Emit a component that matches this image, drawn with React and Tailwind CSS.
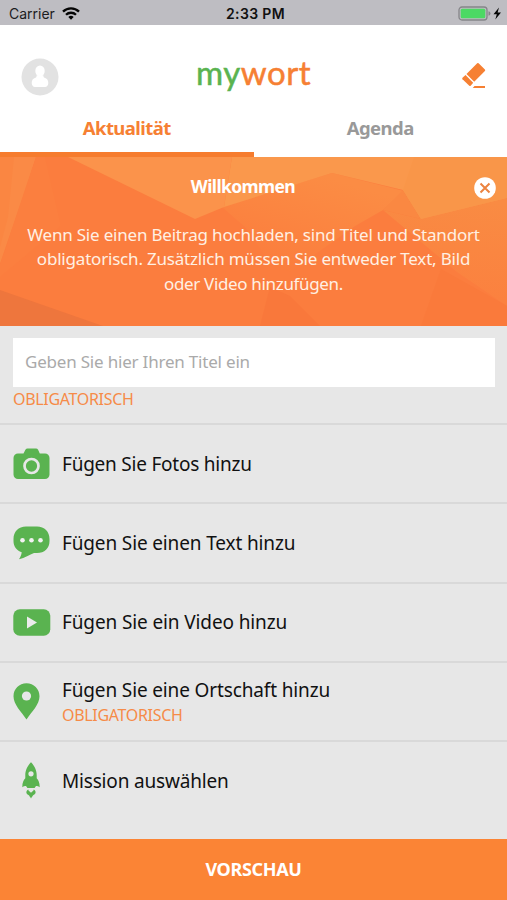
const GREEN = "#5ab350";

const CameraIcon = () => (
  <svg width="37" height="32" viewBox="0 0 37 32">
    <path
      d="M5 5.500h5.500L12.400 1.800Q13.200 .5 14.500 .5h8.500q1.300 0 2.100 1.300L26.800 5.500H32a4.500 4.500 0 0 1 4.500 4.500v16.500a4.500 4.500 0 0 1-4.500 4.500H5a4.500 4.500 0 0 1-4.500-4.500V10A4.500 4.500 0 0 1 5 5.500z"
      fill={GREEN}
    />
    <circle cx="18.500" cy="18" r="7" fill="none" stroke="#e7e7e7" strokeWidth="2.700" />
  </svg>
);

const SpeechIcon = () => (
  <svg width="37" height="34" viewBox="0 0 37 34">
    <path
      d="M13 .5h11c7.500 0 12.500 5 12.500 12.500v2c0 7.500-5 12-12.500 12h-3c-4.500 2-9 4.700-15 6.200 1.500-2.200 2.500-4.600 2.700-7C3.500 24.500.5 20.500.5 15v-2C.5 5.500 5.500.5 13 .5z"
      fill={GREEN}
    />
    <g fill="#f2f2f2">
      <circle cx="9.500" cy="14.300" r="2.300" />
      <circle cx="18.500" cy="14.300" r="2.300" />
      <circle cx="27.500" cy="14.300" r="2.300" />
    </g>
  </svg>
);

const VideoIcon = () => (
  <svg width="38" height="27" viewBox="0 0 38 27">
    <rect x=".3" y=".3" width="37" height="26.400" rx="6.500" fill={GREEN} />
    <path d="M14 7.500v12l10-6z" fill="#ececec" />
  </svg>
);

const PinIcon = () => (
  <svg width="27" height="37" viewBox="0 0 27 37">
    <path
      d="M13.500.3C6.200.3.5 6 .5 13.200c0 8.300 7.500 15 13 23.300 5.500-8.300 13-15 13-23.300C26.500 6 20.800.3 13.500.3z"
      fill={GREEN}
    />
    <circle cx="13.500" cy="13" r="4.600" fill="#e7e7e7" />
  </svg>
);

const RocketIcon = () => (
  <svg className="ml-[9px]" width="18" height="37" viewBox="0 0 18 37">
    <path
      d="M9 .3C5.700 3.500 3.300 8.200 3.300 13v3.300C1.500 18.300.3 20.500.3 25.200c1.300-.9 2.500-1.300 3.700-1.100l1.400 2h7.200l1.400-2c1.200-.2 2.400.2 3.700 1.100 0-4.700-1.200-6.900-3-8.900V13C14.700 8.200 12.300 3.500 9 .3z"
      fill={GREEN}
    />
    <circle cx="9" cy="11.800" r="2.600" fill="#e7e7e7" />
    <path
      d="M6.300 27.500c-2.600 1.500-2.500 4.400.2 5.400.8.700 1.500 1.800 2.500 3.500 1-1.700 1.700-2.800 2.500-3.500 2.700-1 2.800-3.900.2-5.400 0 1.700-1.200 1.500-2.700 3.200-1.500-1.700-2.700-1.500-2.700-3.200z"
      fill={GREEN}
    />
  </svg>
);

const items = [
  { label: "Fügen Sie Fotos hinzu", tracking: "tracking-[-0.23px]", Icon: CameraIcon },
  { label: "Fügen Sie einen Text hinzu", tracking: "tracking-[-0.14px]", Icon: SpeechIcon },
  { label: "Fügen Sie ein Video hinzu", tracking: "tracking-[-0.12px]", Icon: VideoIcon },
  { label: "Fügen Sie eine Ortschaft hinzu", tracking: "tracking-[-0.14px]", Icon: PinIcon, required: true },
  { label: "Mission auswählen", tracking: "tracking-[-0.18px]", Icon: RocketIcon },
];

const StatusBar = () => (
  <div className="grid h-[25px] shrink-0 grid-cols-3 items-center bg-[#bebdc2] pt-[2px] font-['Inter',sans-serif] text-sm leading-none text-[#1c1c1e]">
    <div className="flex items-center gap-[7px] pl-[9px]">
      <span>Carrier</span>
      <svg width="18" height="13" viewBox="0 0 18 13">
        <g fill="none" stroke="#050505" strokeWidth="2.300">
          <path d="M1 4.600a11.300 11.300 0 0 1 16 0" />
          <path d="M4 7.800a7.100 7.100 0 0 1 10 0" />
        </g>
        <path d="M6.300 10.100a3.800 3.800 0 0 1 5.400 0L9 12.800z" fill="#050505" />
      </svg>
    </div>
    <span className="pl-[4px] text-center font-semibold tracking-[0.35px] text-[#111]">2:33 PM</span>
    <div className="flex justify-end pr-[5px]">
      <svg width="44" height="15" viewBox="0 0 44 15">
        <rect x="1" y="1" width="28" height="13" rx="3" fill="none" stroke="#858589" strokeWidth="1.300" />
        <rect x="2.700" y="2.700" width="24.600" height="9.600" rx="1.500" fill="#4cd964" />
        <path d="M30.500 5.200q2 .6 2 2.300t-2 2.300z" fill="#858589" />
        <path d="M41 1.500 35.500 8.300h3.300L37.300 13.500 43 6.500h-3.400z" fill="#050505" />
      </svg>
    </div>
  </div>
);

const Header = () => (
  <header className="flex h-[132px] shrink-0 flex-col bg-white">
    <div className="grid h-[80px] grid-cols-3 items-center pt-[24px]">
      <svg className="ml-[21px]" width="38" height="38" viewBox="0 0 38 38">
        <circle cx="19" cy="19" r="18.500" fill="#e2e2e2" />
        <ellipse cx="19" cy="13" rx="4.700" ry="5.600" fill="#fff" />
        <path
          d="M15.500 17.500h7q-.5 2 1 2.200c2.500.6 3.800 2.500 3.800 5.300 0 2.300-1.300 4-3.300 4H14c-2 0-3.300-1.700-3.300-4 0-2.800 1.300-4.700 3.800-5.300q1.500-.2 1-2.200z"
          fill="#fff"
        />
      </svg>
      <div className="pb-[10px] text-center font-['Lato',sans-serif] text-[33px] leading-[38px] tracking-[0.5px] text-[#f68033] [-webkit-text-stroke:0.5px]">
        <span className="text-[#5ab350]">my</span>wort
      </div>
      <svg className="mb-[4px] mr-[20px] justify-self-end" width="26" height="27" viewBox="0 0 26 27">
        <g fill="#f68033">
          <path d="M16.200 1.300q.7-.6 1.400 0l6.300 6.300q.7.700 0 1.400L13.200 19.800 5.500 12.100z" />
          <path d="m4.500 13.100 7.700 7.700-2.500 3q-.7.600-1.400 0L1.500 17.300q-.6-.8 0-1.500z" />
          <path d="M13.500 24H24v1.900H11.700z" />
        </g>
      </svg>
    </div>
    <nav className="grid flex-1 grid-cols-2 text-center text-[18.5px] font-bold leading-[45px] tracking-[-0.55px]">
      <span className="border-b-[5px] border-[#f67c2e] text-[#f68033]">Aktualität</span>
      <span className="text-[#999]">Agenda</span>
    </nav>
  </header>
);

// low-poly pattern behind the welcome message
const BannerPattern = () => (
  <svg className="absolute inset-0" width="507" height="169" viewBox="0 0 507 169">
    <defs>
      <linearGradient id="band" gradientUnits="userSpaceOnUse" x1="320" y1="18" x2="290" y2="115">
        <stop offset="0" stopColor="#fb8c44" />
        <stop offset="1" stopColor="#fb7d3d" />
      </linearGradient>
      <linearGradient id="right" gradientUnits="userSpaceOnUse" x1="480" y1="45" x2="470" y2="140">
        <stop offset="0" stopColor="#f98b43" />
        <stop offset="1" stopColor="#fb813f" />
      </linearGradient>
    </defs>
    <path d="M0 0h507v169H0z" fill="#fb7d3e" />
    <path d="M0 0h36L22 43 0 107z" fill="#fa8a46" />
    <path d="M0 0h14L8 60 0 90z" fill="#fa8642" />
    <path d="m45 0 16 69L0 120v-13L36 0z" fill="#fb7f3f" />
    <path d="m222 50 110-34 72 18-21 19-28 16-65 46-18-7-27-38z" fill="url(#band)" />
    <path d="m383 53 38 9 86-21v108l-50-34z" fill="url(#right)" />
    <path d="m383 53 20-20 18 29z" fill="#fa8842" />
    <path d="M68 0h164l-8 50-29 12z" fill="#fb934b" />
    <path d="M232 0h275v41l-86 21-18-29-71-17-108 34z" fill="#fa984c" />
    <path d="M414 0h93v41l-86 21-18-29z" fill="#f99649" />
    <path d="m270 130-10 39h60l-30-30z" fill="#f9783b" />
    <path d="m441 112-20 57h86v-20z" fill="#fa7a3b" />
    <path d="m0 133 103 36H0z" fill="#ee763d" />
  </svg>
);

const Banner = () => (
  <section className="relative h-[169px] shrink-0 overflow-hidden text-center text-white">
    <BannerPattern />
    <div className="relative">
      <h1 className="pr-[21px] pt-[17px] text-[17.5px] font-bold leading-6 tracking-[-0.6px]">Willkommen</h1>
      <p className="mt-[25px] whitespace-nowrap text-[17px] leading-[24.3px] tracking-[-0.2px] text-[#fff0e3]">
        Wenn Sie einen Beitrag hochladen, sind Titel und Standort
        <br />
        obligatorisch. Zusätzlich müssen Sie entweder Text, Bild
        <br />
        <span className="tracking-[-0.34px]">oder Video hinzufügen.</span>
      </p>
    </div>
    <button className="absolute right-[11px] top-[20px]" aria-label="Schließen">
      <svg width="22" height="22" viewBox="0 0 22 22">
        <circle cx="11" cy="11" r="10.800" fill="#fff" />
        <path d="m6.500 6.500 9 9m0-9-9 9" stroke="#ec8340" strokeWidth="2" />
      </svg>
    </button>
  </section>
);

const App = () => (
  <main className="flex h-[900px] w-[507px] flex-col overflow-hidden bg-[#e7e7e7] font-['Noto_Sans',sans-serif]">
    <StatusBar />
    <Header />
    <Banner />

    <div className="h-[97px] shrink-0 pl-[13px] pr-[12px] pt-[12px]">
      <div className="h-[49px] bg-white pl-[12px] text-[17px] leading-[48px] tracking-[-0.2px] text-[#aaa]">
        Geben Sie hier Ihren Titel ein
      </div>
      <p className="text-base leading-6 tracking-[-0.32px] text-[#f68b48]">OBLIGATORISCH</p>
    </div>

    <ul className="flex-1">
      {items.map(({ label, tracking, Icon, required }) => (
        <li key={label} className="flex h-[79.3px] items-center border-t-2 border-[#d9d9d9] pl-[13px]">
          <span className="w-[49px] shrink-0">
            <Icon />
          </span>
          <span className="whitespace-nowrap">
            <span className={`block text-[19px] leading-[26px] text-[#111] ${tracking}`}>{label}</span>
            {required && (
              <span className="block text-base leading-6 tracking-[-0.32px] text-[#f68b48]">OBLIGATORISCH</span>
            )}
          </span>
        </li>
      ))}
    </ul>

    <button className="h-[61px] shrink-0 bg-[#fb8435] text-[18px] font-bold tracking-[-0.35px] text-white">
      VORSCHAU
    </button>
  </main>
);

export default App;
